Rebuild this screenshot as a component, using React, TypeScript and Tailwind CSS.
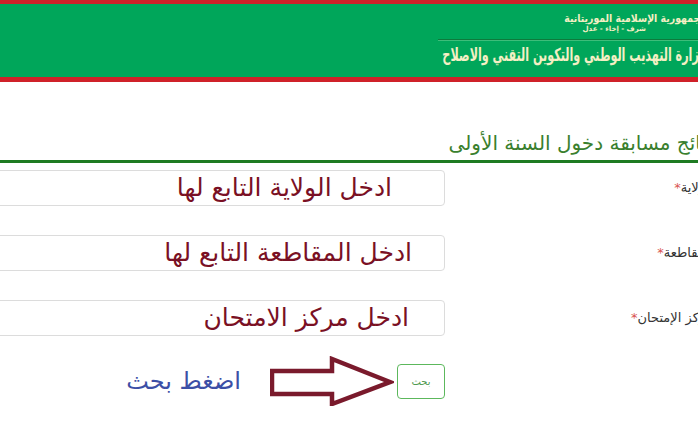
import React from 'react';

const arabic = { fontFamily: '"DejaVu Sans", "Noto Sans", sans-serif' };

const fields = [
  { label: 'الولاية', hint: 'ادخل الولاية التابع لها', pr: 'pr-[52px]' },
  { label: 'المقاطعة', hint: 'ادخل المقاطعة التابع لها', pr: 'pr-[32px]' },
  { label: 'مركز الإمتحان', hint: 'ادخل مركز الامتحان', pr: 'pr-[35px]' },
];

const Arrow = () => (
  <svg width="124" height="50" viewBox="0 0 124 50" className="shrink-0">
    <path
      d="M2 15 L62 15 L62 3 L120 26 L62 48 L62 38 L2 38 Z"
      fill="white"
      stroke="#7a1a2c"
      strokeWidth="4.5"
      strokeLinejoin="miter"
    />
  </svg>
);

export default function App() {
  return (
    <div className="w-[698px] h-[433px] overflow-hidden bg-white" style={arabic}>
      <div dir="rtl" className="-ml-[20px] w-[736px]">
        {/* Header band */}
        <header className="h-[82px] bg-[#00a65a] border-t-4 border-b-[5px] border-[#cf2129] flex overflow-hidden">
          <div className="w-[278px] flex flex-col pr-[4px] whitespace-nowrap">
            <div className="text-[11px] font-bold leading-[13px] text-[#f4efc4] pt-[8px] pr-[6px] scale-x-[0.85] origin-right">
              الجمهورية الإسلامية الموريتانية
            </div>
            <div className="text-[7px] font-bold leading-[9px] text-[#f4efc4] pr-[66px]">
              شرف - إخاء - عدل
            </div>
            <div className="mt-[5px] h-[2px] bg-[#0d7a3c] border-b border-[#3dbd7a]" />
            <div className="text-[18px] font-bold leading-[28px] text-[#f4efc4] pr-[10px] scale-x-[0.62] origin-right">
              وزارة التهذيب الوطني والتكوين التقني والاصلاح
            </div>
          </div>
        </header>

        {/* Title */}
        <div className="mt-[46px] border-b-[3px] border-[#1e7b22] pr-[3px] pb-[2px]">
          <h1 className="text-[20px] leading-[30px] text-[#3a7f2e] whitespace-nowrap">
            نتائج مسابقة دخول السنة الأولى
          </h1>
        </div>

        {/* Form */}
        <div className="mt-[7px] flex flex-col gap-[29px]">
          {fields.map((f) => (
            <div key={f.label} className="flex items-center">
              <label className="w-[271px] shrink-0 pr-[3px] text-[13px] text-[#333] whitespace-nowrap">
                {f.label}
                <span className="text-[#d9534f]">*</span>
              </label>
              <div
                className={`flex-1 h-[36px] border border-[#dcdcdc] rounded-[4px] flex items-center ${f.pr} text-[25px] text-[#7a1024] whitespace-nowrap`}
              >
                {f.hint}
              </div>
            </div>
          ))}

          <div className="flex items-center -mt-[9px]">
            <div className="w-[271px] shrink-0" />
            <div className="flex items-center gap-[3px]">
              <button className="w-[48px] h-[35px] border border-[#5cb85c] rounded-[4px] text-[10px] text-[#4f9a50] bg-white">
                بحث
              </button>
              <Arrow />
              <span className="mr-[26px] text-[24px] text-[#3c4fa6] whitespace-nowrap">اضغط بحث</span>
            </div>
          </div>
        </div>
      </div>
    </div>
  );
}
